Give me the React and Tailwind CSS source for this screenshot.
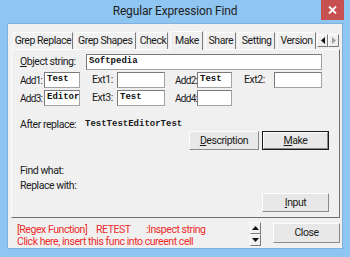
import React from "react";

const Field = ({ value = "", className = "" }) => (
  <div
    className={`h-[16px] bg-white border border-[#a3a3a3] border-t-[#7a7a7a] border-l-[#7a7a7a] pl-[2px] flex items-center font-['Liberation_Mono',monospace] font-bold text-[9px] tracking-normal text-[#111] whitespace-nowrap overflow-hidden ${className}`}
  >
    {value}
  </div>
);

const Btn = ({ label, mn, primary = false, className = "" }) => (
  <div
    className={`flex items-center justify-center bg-[#e8e8e8] ${
      primary ? "border border-[#1a1a1a]" : "border border-[#fdfdfd] border-r-[#8a8a8a] border-b-[#8a8a8a]"
    } ${className}`}
  >
    <div
      className={`w-full h-full flex items-center justify-center ${
        primary ? "border border-[#fdfdfd] border-r-[#8a8a8a] border-b-[#8a8a8a]" : ""
      }`}
    >
      {mn ? (
        <span>
          <span className="underline underline-offset-1">{label[0]}</span>
          {label.slice(1)}
        </span>
      ) : (
        label
      )}
    </div>
  </div>
);

const tabs = [
  { name: "Grep Replace", w: "w-[60px]" },
  { name: "Grep Shapes", w: "w-[61px]" },
  { name: "Check", w: "w-[31px]" },
  { name: "Make", w: "w-[33px]", active: true },
  { name: "Share", w: "w-[31px]" },
  { name: "Setting", w: "w-[37px]" },
  { name: "Version", w: "w-[39px]" },
];

const Lbl = ({ children, className = "" }) => (
  <span className={`text-[10px] tracking-[-0.7px] ${className}`}>{children}</span>
);

export default function App() {
  return (
    <div className="w-[350px] h-[257px] bg-[#8fc5f1] flex flex-col font-['Roboto',sans-serif] text-[10.5px] tracking-[-0.45px] text-[#1b1b1b] whitespace-nowrap overflow-hidden">
      {/* title bar */}
      <div className="relative h-[23px] flex items-center justify-center">
        <span className="text-[12px] tracking-[-0.15px] text-[#1e1e1e] -mt-[1px]">
          Regular Expression Find
        </span>
        <div className="absolute right-[6px] top-0 w-[23px] h-[20px] bg-[#c75050] flex items-center justify-center">
          <svg width="9" height="8" viewBox="0 0 9 8">
            <path d="M1 0.5 L8 7.5 M8 0.5 L1 7.5" stroke="#fff" strokeWidth="1.8" />
          </svg>
        </div>
      </div>

      {/* client */}
      <div className="mx-[7px] mb-[8px] flex-1 bg-[#f0f0f0] border border-[#7fb0dd] flex flex-col">
        {/* tabs */}
        <div className="mt-[6px] ml-[4px] mr-[3px] h-[19px] flex items-end">
          {tabs.map((t) =>
            t.active ? (
              <div
                key={t.name}
                className={`${t.w} h-[19px] -mb-[1px] z-10 bg-[#f0f0f0] border border-b-0 border-[#fdfdfd] border-r-[#7a7a7a] flex items-center justify-center mx-[1px] pb-[1px]`}
              >
                {t.name}
              </div>
            ) : (
              <div
                key={t.name}
                className={`${t.w} h-[17px] border-t border-l border-[#fdfdfd] border-r border-r-[#7a7a7a] flex items-center justify-center mx-[1px] pb-[1px]`}
              >
                {t.name}
              </div>
            )
          )}
          <div className="ml-auto mb-[2px] flex h-[13px]">
            <div className="w-[11px] h-[13px] bg-[#f0f0f0] border border-[#fdfdfd] border-r-[#7a7a7a] border-b-[#7a7a7a] flex items-center justify-center">
              <svg width="4" height="7" viewBox="0 0 4 7">
                <path d="M4 0 L0 3.5 L4 7 Z" fill="#111" />
              </svg>
            </div>
            <div className="w-[11px] h-[13px] bg-[#f0f0f0] border border-[#fdfdfd] border-r-[#7a7a7a] border-b-[#7a7a7a] flex items-center justify-center">
              <svg width="4" height="7" viewBox="0 0 4 7">
                <path d="M0 0 L4 3.5 L0 7 Z" fill="#a0a0a0" />
              </svg>
            </div>
          </div>
        </div>

        {/* panel */}
        <div className="ml-[3px] mr-[2px] h-[169px] border border-[#fdfdfd] border-r-[#6e6e6e] border-b-[#6e6e6e] flex flex-col pl-[8px]">
          <div className="mt-[4px] flex items-center h-[16px]">
            <span className="w-[66px]">
              <span className="underline underline-offset-1">O</span>bject string:
            </span>
            <Field value="Softpedia" className="w-[236px]" />
          </div>

          <div className="mt-[2px] flex items-center h-[16px]">
            <Lbl className="w-[24px]">Add1:</Lbl>
            <Field value="Test" className="w-[36px]" />
            <span className="ml-[12px] w-[25px]">Ext1:</span>
            <Field className="w-[48px]" />
            <Lbl className="ml-[10px] w-[22px]">Add2:</Lbl>
            <Field value="Test" className="w-[35px]" />
            <span className="ml-[12px] w-[30px]">Ext2:</span>
            <Field className="w-[48px]" />
          </div>

          <div className="mt-[2px] flex items-center h-[16px]">
            <Lbl className="w-[24px]">Add3:</Lbl>
            <Field value="Editor" className="w-[36px]" />
            <span className="ml-[12px] w-[25px]">Ext3:</span>
            <Field value="Test" className="w-[48px]" />
            <Lbl className="ml-[10px] w-[22px]">Add4:</Lbl>
            <Field className="w-[35px]" />
          </div>

          <div className="mt-[11px] flex items-center h-[16px]">
            <span className="w-[65px]">After replace:</span>
            <span className="font-['Liberation_Mono',monospace] font-bold text-[9px] tracking-normal">
              TestTestEditorTest
            </span>
          </div>

          <div className="mt-[-2px] flex h-[19px]">
            <Btn label="Description" mn className="ml-[169px] w-[70px]" />
            <Btn label="Make" mn primary className="ml-[3px] w-[67px]" />
          </div>

          <div className="mt-[13px] h-[16px] flex items-center">Find what:</div>
          <div className="mt-[-1px] h-[16px] flex items-center">Replace with:</div>

          <div className="mt-[-1px] flex h-[19px]">
            <Btn label="Input" mn className="ml-[242px] w-[67px]" />
          </div>
        </div>

        {/* footer */}
        <div className="flex-1 flex items-center pl-[9px] pr-[2px]">
          <div className="flex-1 text-[#ee2b2b] leading-[12px] pt-[5px]">
            <div className="flex">
              <span className="w-[79px]">[Regex Function]</span>
              <span className="w-[50px]">RETEST</span>
              <span>:Inspect string</span>
            </div>
            <div>Click here, insert this func into cureent cell</div>
          </div>
          <div className="flex flex-col mr-[12px] mt-[2px]">
            <div className="w-[11px] h-[12px] border border-[#fdfdfd] border-r-[#7a7a7a] border-b-[#7a7a7a] flex items-center justify-center">
              <svg width="7" height="4" viewBox="0 0 7 4">
                <path d="M0 4 L3.5 0 L7 4 Z" fill="#111" />
              </svg>
            </div>
            <div className="w-[11px] h-[12px] border border-[#fdfdfd] border-r-[#7a7a7a] border-b-[#7a7a7a] flex items-center justify-center">
              <svg width="7" height="4" viewBox="0 0 7 4">
                <path d="M0 0 L3.5 4 L7 0 Z" fill="#111" />
              </svg>
            </div>
          </div>
          <Btn label="Close" className="w-[67px] h-[20px] -mt-[1px]" />
        </div>
      </div>
    </div>
  );
}
